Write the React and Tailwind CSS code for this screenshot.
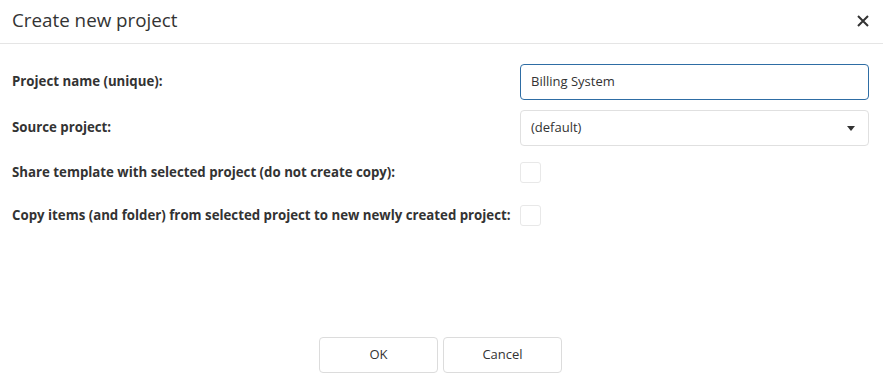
export default function App() {
  const font = { fontFamily: '"Open Sans", "Noto Sans", sans-serif' };
  return (
    <div className="w-[883px] h-[391px] bg-white text-[#333] flex flex-col" style={font}>
      <div className="h-[44px] border-b border-[#e5e5e5] flex items-center justify-between pl-[12px] pr-[14px]">
        <h1 className="text-[18.8px] leading-none font-normal text-[#333] pb-[2px]">Create new project</h1>
        <svg width="12" height="12" viewBox="0 0 12 12" className="mb-[2px]">
          <path d="M1 1L11 11M11 1L1 11" stroke="#333" strokeWidth="2" />
        </svg>
      </div>
      <div className="flex flex-col pl-[12px] pr-[14px] pt-[20px] text-[13px]">
        <div className="flex items-center h-[36px]">
          <div className="w-[508px] font-bold text-[13.25px]">Project name (unique):</div>
          <div className="flex-1 h-[36px] border border-[#2e6da4] rounded-[4px] flex items-center px-[10px] text-[#333]">Billing System</div>
        </div>
        <div className="flex items-center h-[36px] mt-[10px]">
          <div className="w-[508px] font-bold text-[13.25px]">Source project:</div>
          <div className="flex-1 h-[36px] border border-[#e0e0e0] rounded-[4px] flex items-center justify-between pl-[10px] pr-[13px]">
            <span>(default)</span>
            <svg width="8" height="5" viewBox="0 0 8 5"><path d="M0 0H8L4 5Z" fill="#333" /></svg>
          </div>
        </div>
        <div className="flex items-center h-[35px] mt-[9px]">
          <div className="w-[508px] font-bold text-[13.25px]">Share template with selected project (do not create copy):</div>
          <div className="w-[21px] h-[21px] border border-[#e8e8e8] rounded-[3px]" />
        </div>
        <div className="flex items-center h-[35px] mt-[8px]">
          <div className="w-[508px] font-bold text-[13.25px]">Copy items (and folder) from selected project to new newly created project:</div>
          <div className="w-[21px] h-[21px] border border-[#e8e8e8] rounded-[3px]" />
        </div>
      </div>
      <div className="flex-1" />
      <div className="flex justify-center gap-[5px] pb-[18px] pr-[2px] text-[13px]">
        <button className="w-[119px] h-[36px] border border-[#dcdcdc] rounded-[4px] bg-white text-[#333]">OK</button>
        <button className="w-[119px] h-[36px] border border-[#dcdcdc] rounded-[4px] bg-white text-[#333]">Cancel</button>
      </div>
    </div>
  );
}
